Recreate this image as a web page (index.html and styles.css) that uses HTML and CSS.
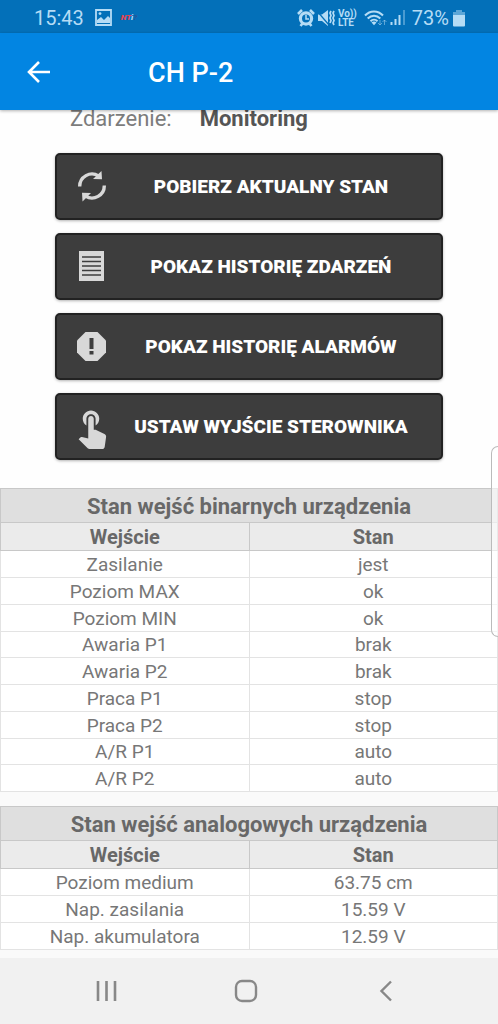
FILE: index.html
```html
<!DOCTYPE html>
<html lang="pl">
  <head>
    <meta charset="UTF-8" />
    <meta name="viewport" content="width=device-width, initial-scale=1.0" />
    <title>CH P-2</title>
    <link rel="stylesheet" href="styles.css">
  </head>
  <body>
    <div class="status-bar">
      <span class="clock">15:43</span>
      <svg class="picture" width="17" height="17" viewBox="0 0 17 17">
        <path d="M1 1h15v15H1z" fill="none" stroke="currentColor" stroke-width="1.8" />
        <path d="M2 14v-3l4-3 3 3 4-4 2 2v5z" fill="currentColor" />
        <circle cx="5" cy="4.6" r="1.4" fill="currentColor" />
      </svg>
      <span class="app-mark"><span class="mark-red">NT</span>i<span class="mark-dark">?</span></span>
      <div class="status-icons">
        <svg width="18" height="18" viewBox="0 0 18 18">
          <circle cx="9" cy="9.5" r="5.6" fill="none" stroke="currentColor" stroke-width="3.2" />
          <path d="M9 6v4h3" fill="none" stroke="currentColor" stroke-width="1.5" />
          <path d="M1 5l4-4M17 5l-4-4M3.5 17l2-2.5M14.5 17l-2-2.5" stroke="currentColor" stroke-width="2.6" />
        </svg>
        <svg class="mute" width="18" height="18" viewBox="0 0 18 18">
          <path d="M1 5.5h4l6-4.5v16l-6-5H1z" fill="currentColor" />
          <path d="M0 2l12 14" stroke="#0370b9" stroke-width="1.2" />
          <path d="M14 2l-1 2 1 2.500L13 9l1 2.500-1 2.500M17 2l-1 2 1 2.500L16 9l1 2.500-1 2.500 1 2" fill="none" stroke="currentColor" stroke-width="1.7" />
        </svg>
        <span class="volte"><span>Vo))</span><span>LTE</span></span>
        <svg class="wifi" width="24" height="18" viewBox="0 0 24 18">
          <path d="M1 6.5c5-5.5 13-5.5 18 0M3.7 9.5c3.7-3.8 8.9-3.8 12.6 0M6.5 12.3c2-2 5-2 7 0" fill="none" stroke="currentColor" stroke-width="2" />
          <path d="M7.5 13.5L10 16.3l2.5-2.8c-1.5-1.3-3.5-1.3-5 0z" fill="currentColor" />
          <path d="M16 11v5m-2-2l2 2 2-2M20.500 16v-5m-2 2l2-2 2 2" fill="none" stroke="currentColor" stroke-width="1" opacity=".5" />
        </svg>
        <svg class="signal" width="16" height="17" viewBox="0 0 16 17">
          <path d="M1.5 13v3M5.5 10v6M9.5 6v10" stroke="currentColor" stroke-width="2" />
          <path d="M14 1v15" stroke="currentColor" stroke-width="2" opacity=".4" />
        </svg>
        <span class="percent">73%</span>
        <svg width="12" height="18" viewBox="0 0 12 18">
          <path d="M3 1h6v2h3v3H0V3h3z" fill="currentColor" opacity=".5" />
          <path d="M0 6h12v10.5q0 1-1 1H1q-1 0-1-1z" fill="currentColor" />
        </svg>
      </div>
    </div>

    <header class="app-bar">
      <button class="back-btn" aria-label="Wstecz">
        <svg width="24" height="24" viewBox="0 0 24 24">
          <path d="M23 12H2.5M12 2L2 12l10 10" fill="none" stroke="currentColor" stroke-width="2.6" />
        </svg>
      </button>
      <h1>CH P-2</h1>
    </header>

    <main class="content">
      <p class="event"><span>Zdarzenie:</span><strong>Monitoring</strong></p>

      <div class="actions">
        <button class="action-btn">
          <svg width="32" height="32" viewBox="0 0 32 32">
            <path d="M4.7 15.5A12.3 12.3 0 0 1 23.5 4.9M29.3 14.5A12.3 12.3 0 0 1 10.5 25.1" fill="none" stroke="currentColor" stroke-width="3.4" />
            <path d="M26.5 0l.5 8.2-9-.2zM7.5 30.5L7 21.8l9 .2z" fill="currentColor" />
          </svg>
          <span>POBIERZ AKTUALNY STAN</span>
        </button>
        <button class="action-btn">
          <svg width="32" height="32" viewBox="0 0 32 32">
            <path d="M4 0h25v30H4z" fill="currentColor" />
            <path d="M7 6h19M7 10.5h19M7 15h19M7 19.5h19M7 24h19" stroke="#3d3d3d" stroke-width="1.7" />
          </svg>
          <span>POKAZ HISTORIĘ ZDARZEŃ</span>
        </button>
        <button class="action-btn">
          <svg width="32" height="32" viewBox="0 0 32 32">
            <path d="M10.5 1h12L31 9.5v12L22.5 30h-12L2 21.5v-12z" fill="currentColor" />
            <path d="M14.5 7h4v11h-4zM14.5 20h4v3.5h-4z" fill="#3d3d3d" />
          </svg>
          <span>POKAZ HISTORIĘ ALARMÓW</span>
        </button>
        <button class="action-btn">
          <svg width="32" height="44" viewBox="3 0 17 24">
            <path d="M9 11.24V7.5C9 6.12 10.12 5 11.5 5S14 6.12 14 7.5v3.74c1.21-.81 2-2.18 2-3.74C16 5.01 13.99 3 11.5 3S7 5.01 7 7.5c0 1.56.79 2.93 2 3.74zm9.84 4.63l-4.54-2.26c-.17-.07-.35-.11-.54-.11H13v-6c0-.83-.67-1.5-1.5-1.5S10 6.67 10 7.5v10.74l-3.43-.72c-.08-.01-.15-.03-.24-.03-.31 0-.59.13-.79.33l-.79.8 4.94 4.94c.27.27.65.44 1.06.44h6.79c.75 0 1.33-.55 1.44-1.28l.75-5.27c.01-.07.02-.14.02-.2 0-.62-.38-1.16-.91-1.38z" fill="currentColor" />
          </svg>
          <span>USTAW WYJŚCIE STEROWNIKA</span>
        </button>
      </div>

      <table class="inputs">
        <thead>
          <tr class="caption"><th colspan="2">Stan wejść binarnych urządzenia</th></tr>
          <tr><th>Wejście</th><th>Stan</th></tr>
        </thead>
        <tbody>
          <tr><td>Zasilanie</td><td>jest</td></tr>
          <tr><td>Poziom MAX</td><td>ok</td></tr>
          <tr><td>Poziom MIN</td><td>ok</td></tr>
          <tr><td>Awaria P1</td><td>brak</td></tr>
          <tr><td>Awaria P2</td><td>brak</td></tr>
          <tr><td>Praca P1</td><td>stop</td></tr>
          <tr><td>Praca P2</td><td>stop</td></tr>
          <tr><td>A/R P1</td><td>auto</td></tr>
          <tr><td>A/R P2</td><td>auto</td></tr>
        </tbody>
      </table>

      <table class="inputs">
        <thead>
          <tr class="caption"><th colspan="2">Stan wejść analogowych urządzenia</th></tr>
          <tr><th>Wejście</th><th>Stan</th></tr>
        </thead>
        <tbody>
          <tr><td>Poziom medium</td><td>63.75 cm</td></tr>
          <tr><td>Nap. zasilania</td><td>15.59 V</td></tr>
          <tr><td>Nap. akumulatora</td><td>12.59 V</td></tr>
        </tbody>
      </table>
    </main>

    <nav class="nav-bar">
      <button aria-label="Ostatnie">
        <svg width="24" height="24" viewBox="0 0 24 24">
          <path d="M4 2v20M12.5 2v20M21 2v20" stroke="currentColor" stroke-width="2.6" />
        </svg>
      </button>
      <button aria-label="Ekran główny">
        <svg width="24" height="24" viewBox="0 0 24 24">
          <rect x="2" y="2" width="20" height="20" rx="6" fill="none" stroke="currentColor" stroke-width="2.4" />
        </svg>
      </button>
      <button aria-label="Cofnij">
        <svg width="24" height="24" viewBox="0 0 24 24">
          <path d="M17 2.5L7.5 12l9.5 9.5" fill="none" stroke="currentColor" stroke-width="2.4" />
        </svg>
      </button>
    </nav>

    <div class="edge-panel"></div>
  </body>
</html>
```
FILE: styles.css
```css
* {
  box-sizing: border-box;
}

body {
  font-family: Roboto, "Noto Sans", sans-serif;
  display: flex;
  flex-direction: column;
  height: 100vh;
  margin: 0;
  background-color: #fafafa;
  overflow: hidden;
}

button {
  font-family: inherit;
  border: none;
  cursor: pointer;
}

svg {
  display: block;
  flex: none;
}

/* status bar */
.status-bar {
  display: flex;
  align-items: center;
  height: 33px;
  flex: none;
  padding: 2px 33px 0 34px;
  background-color: #0370b9;
  color: #b5dcf5;
}

.clock,
.percent {
  font-size: 20px;
}

.picture {
  margin-left: 11px;
}

.app-mark {
  margin-left: 9px;
  font-size: 8px;
  font-weight: 900;
  font-style: italic;
}

.mark-red {
  color: #e8424f;
}

.mark-dark {
  color: #24579c;
}

.status-icons {
  display: flex;
  align-items: center;
  margin-left: auto;
}

.mute {
  margin-left: 2px;
}

.volte {
  display: flex;
  flex-direction: column;
  margin-left: 3px;
  font-size: 10px;
  line-height: 9px;
  font-weight: bold;
}

.wifi {
  margin-left: 7px;
}

.signal {
  margin-left: 2px;
}

.percent {
  margin: 0 4px 0 6px;
}

/* title bar */
.app-bar {
  display: flex;
  align-items: center;
  height: 77px;
  flex: none;
  padding-left: 27px;
  background-color: #0285e2;
  color: #fff;
  box-shadow: 0 1px 3px rgba(0, 0, 0, 0.3);
  z-index: 1;
}

.back-btn {
  padding: 0;
  background: none;
  color: inherit;
}

.app-bar h1 {
  margin: 0 0 0 97px;
  padding-top: 2px;
  font-size: 27px;
  font-weight: 500;
}

/* scrolled content */
.content {
  flex: 1;
  min-height: 0;
  overflow: hidden;
}

.event {
  display: flex;
  gap: 28px;
  margin: -5px 0 0;
  padding-left: 70px;
  background-color: #fefefe;
  font-size: 22px;
  line-height: 28px;
  color: #7c7c7c;
}

.event strong {
  color: #555;
}

.actions {
  display: flex;
  flex-direction: column;
  gap: 13px;
  padding: 20px 55px 28px;
  background-color: #fefefe;
}

.action-btn {
  display: flex;
  align-items: center;
  height: 67px;
  padding: 0 6px 0 18px;
  border: 2px solid #222;
  border-radius: 5px;
  background-color: #3d3d3d;
  box-shadow: 0 1px 3px rgba(0, 0, 0, 0.3);
  color: #d8d8d8;
}

.action-btn span {
  flex: 1;
  font-size: 19px;
  font-weight: 900;
  color: #fff;
  text-align: center;
  white-space: nowrap;
}

.inputs {
  width: 100%;
  margin-bottom: 14px;
  border-collapse: collapse;
  table-layout: fixed;
  background-color: #fff;
  font-size: 19px;
  line-height: 24px;
  color: #777;
  text-align: center;
}

.inputs th,
.inputs td {
  height: 27px;
  padding: 1px 0 0;
  border: 1px solid #e3e3e3;
}

.inputs th {
  height: 28px;
  border-color: #c8c8c8;
  background-color: #ebebeb;
  font-size: 20px;
  color: #686868;
}

.inputs .caption th {
  height: 34px;
  padding-top: 3px;
  background-color: #dfdfdf;
  font-size: 22px;
}

.inputs tbody tr:nth-child(4n) td {
  height: 26px;
}

/* system navigation */
.nav-bar {
  display: flex;
  justify-content: space-between;
  align-items: center;
  height: 66px;
  flex: none;
  padding: 0 100px 0 94px;
  background-color: #f1f1f1;
}

.nav-bar button {
  padding: 0;
  background: none;
  color: #888;
}

.edge-panel {
  position: absolute;
  top: 446px;
  right: 0;
  width: 7px;
  height: 191px;
  border: 1px solid #bbb;
  border-right: none;
  border-radius: 7px 0 0 7px;
  background-color: rgba(255, 255, 255, 0.6);
}
```
